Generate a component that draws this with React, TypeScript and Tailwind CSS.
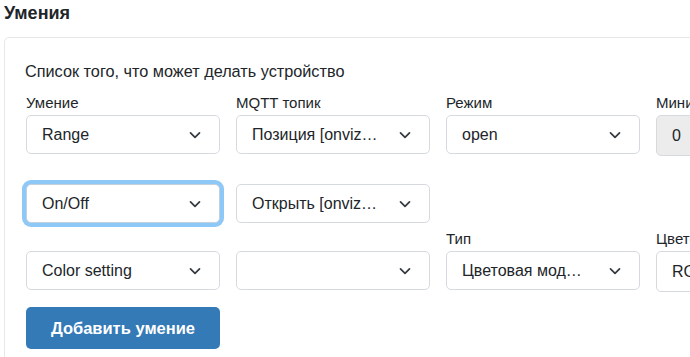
import React from "react";

const font = { fontFamily: '"Liberation Sans", Arial, sans-serif' };

function Chevron() {
  return (
    <svg width="12" height="8" viewBox="0 0 12 8" className="shrink-0 ml-auto">
      <path d="M1.5 1.8l4.5 4.5 4.5-4.5" fill="none" stroke="#343a40" strokeWidth="1.7" strokeLinecap="round" strokeLinejoin="round" />
    </svg>
  );
}

function Select({ value, focused, textW = "w-[131px]" }: { value: string; focused?: boolean; textW?: string }) {
  return (
    <div
      className={
        "h-[39px] w-[194px] rounded-[5px] border bg-white flex items-center pl-[15px] pr-[18px] text-[16px] text-[#212529] " +
        (focused
          ? "border-[#c3d0de] shadow-[0_0_0_4px_#8ec8f6]"
          : "border-[#d6dadf]")
      }
    >
      <span className={"truncate " + textW}>{value}</span>
      <Chevron />
    </div>
  );
}

function Input({ value, disabled }: { value: string; disabled?: boolean }) {
  return (
    <div
      className={
        "h-[41px] w-[194px] rounded-[5px] border border-[#d6dadf] flex items-center pl-[15px] text-[16px] text-[#212529] " +
        (disabled ? "bg-[#ececec]" : "bg-white")
      }
    >
      {value}
    </div>
  );
}

function Label({ text }: { text?: string }) {
  return (
    <div className="h-[28px] pt-[6px] text-[15px] leading-[20px] text-[#212529] whitespace-nowrap">
      {text ?? ""}
    </div>
  );
}

export default function App() {
  const rows: { label?: string; field: React.ReactNode }[][] = [
    [
      { label: "Умение", field: <Select value="Range" /> },
      { label: "MQTT топик", field: <Select value="Позиция [onvizor_curtain]" /> },
      { label: "Режим", field: <Select value="open" /> },
      { label: "Минимум", field: <Input value="0" disabled /> },
    ],
    [
      { field: <Select value="On/Off" focused /> },
      { field: <Select value="Открыть [onvizor_curtain]" /> },
    ],
    [
      { field: <Select value="Color setting" /> },
      { field: <Select value="" /> },
      { label: "Тип", field: <Select value="Цветовая модель" textW="w-[121px]" /> },
      { label: "Цветовая модель", field: <Input value="RGB" /> },
    ],
  ];

  return (
    <div className="w-[690px] h-[357px] overflow-hidden bg-white" style={font}>
      <h2 className="pl-[4px] pt-[2px] h-[37px] text-[18px] leading-[22px] font-bold text-[#212529]">Умения</h2>
      <div className="ml-[4px] w-[900px] rounded-[5px] border border-[#e8e8e8] pl-[20px] pt-[21px] pb-4">
        <p className="text-[16.25px] leading-[24px] text-[#212529] mb-[4px]">
          Список того, что может делать устройство
        </p>
        {rows.map((row, i) => (
          <div key={i} className="flex gap-[16px] pl-[1px]">
            {row.map((c, j) => (
              <div key={j} className="w-[194px]">
                <Label text={c.label} />
                {c.field}
              </div>
            ))}
          </div>
        ))}
        <button className="mt-[15px] ml-[1px] h-[42px] w-[194px] rounded-[5px] bg-[#337ab7] text-white text-[16.5px] font-bold">
          Добавить умение
        </button>
      </div>
    </div>
  );
}
